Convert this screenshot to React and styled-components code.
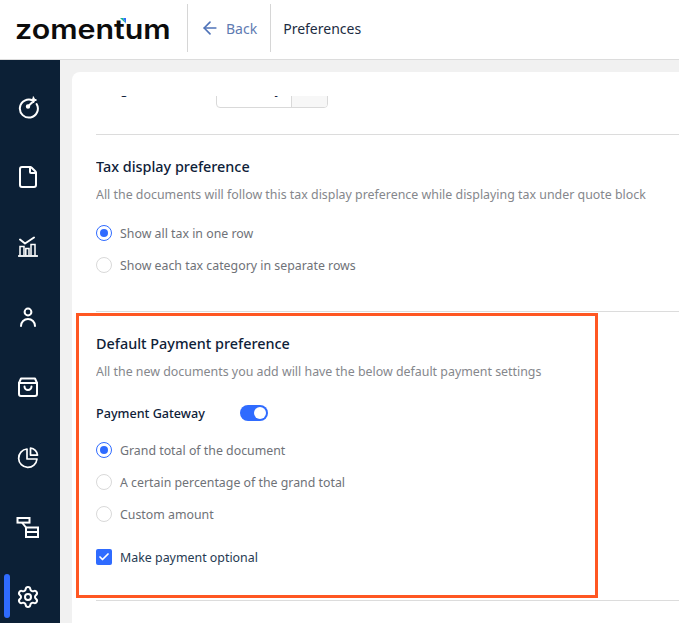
import styled, { createGlobalStyle } from "styled-components";
import { ArrowLeft, File, Settings, Check } from "lucide-react";

const GlobalStyle = createGlobalStyle`
    html, body {
        margin: 0;
        padding: 0;
        background: #fff;
        font-family: "Noto Sans", "Open Sans", sans-serif;
    }
    * { box-sizing: border-box; }
`;

const Page = styled.div`
    width: 679px;
    height: 623px;
    overflow: hidden;
    display: flex;
    flex-direction: column;
    position: relative;
`;

const Header = styled.header`
    height: 60px;
    flex: none;
    display: flex;
    align-items: flex-start;
    border-bottom: 1px solid #dcdcdc;
    background: #fff;
`;

const LogoBox = styled.div`
    width: 187px;
    height: 59px;
    padding-left: 15px;
    display: flex;
    align-items: center;
    position: relative;
`;

const Logo = styled.span`
    font-family: "Inter", sans-serif;
    font-weight: 600;
    font-size: 27px;
    color: #0c0c0c;
    line-height: 1;
    transform: scaleX(1.125);
    transform-origin: left center;
`;

const LogoMark = styled.svg`
    position: absolute;
    left: 120px;
    top: 18px;
`;

const HeaderCell = styled.div`
    height: 48px;
    margin-top: 4px;
    border-left: 1px solid #d6d6d6;
    display: flex;
    align-items: center;
    font-size: 14px;
    padding: 0 ${props => props.$pad}px 0 ${props => props.$left}px;
    color: ${props => props.$color};
    gap: 6px;
`;

const Body = styled.div`
    flex: 1;
    display: flex;
    min-height: 0;
    background: #f1f1f1;
`;

const Sidebar = styled.nav`
    width: 60px;
    flex: none;
    background: #0c2036;
    padding-top: 12px;
    display: flex;
    flex-direction: column;
`;

const NavItem = styled.div`
    height: 70px;
    flex: none;
    display: flex;
    align-items: center;
    justify-content: center;
    position: relative;
    margin-left: -4px;
    color: #fff;
`;

const ActiveBar = styled.span`
    position: absolute;
    left: 8px;
    top: 12px;
    width: 6px;
    height: 44px;
    border-radius: 3px;
    background: #2f6bff;
`;

const Main = styled.main`
    flex: 1;
    min-width: 0;
    padding: 12px 0 0 12px;
`;

const Card = styled.div`
    height: 100%;
    background: #fff;
    border-radius: 8px 0 0 0;
    padding: 24px 0 0 24px;
`;

const Scroll = styled.div`
    height: 100%;
    overflow: hidden;
`;

const CutRow = styled.div`
    margin-top: -19px;
    height: 58px;
    display: flex;
    align-items: flex-start;
    border-bottom: 1px solid #dcdcdc;
    font-size: 13px;
    line-height: 24px;
    color: #12233a;
`;

const CutLabel = styled.span`
    width: 120px;
`;

const Select = styled.div`
    width: 112px;
    height: 32px;
    margin-top: -1px;
    border: 1px solid #d9d9d9;
    border-radius: 4px;
    display: flex;
    overflow: hidden;
`;

const SelectValue = styled.div`
    width: 75px;
    padding-left: 14px;
    line-height: 24px;
    border-right: 1px solid #d9d9d9;
`;

const SelectAddon = styled.div`
    flex: 1;
    background: #f7f7f7;
`;

const Section = styled.section`
    height: ${props => props.$height}px;
    border-bottom: 1px solid #dcdcdc;
    padding-top: ${props => props.$top}px;
`;

const Title = styled.h3`
    margin: 0;
    font-size: 14.4px;
    font-weight: 500;
    line-height: 20px;
    color: #0e2138;
`;

const Description = styled.p`
    margin: 8px 0 0;
    font-size: 12.4px;
    line-height: 20px;
    color: #85878c;
    white-space: nowrap;
`;

const GatewayRow = styled.div`
    margin-top: 19px;
    height: 24px;
    display: flex;
    align-items: center;
`;

const GatewayLabel = styled.span`
    width: 144px;
    font-size: 12.6px;
    font-weight: 500;
    color: #0e2138;
`;

const Toggle = styled.span`
    width: 28px;
    height: 16px;
    border-radius: 8px;
    background: #2f6bff;
    display: flex;
    align-items: center;
    justify-content: flex-end;
    padding-right: 2px;
    &::after {
        content: "";
        width: 12px;
        height: 12px;
        border-radius: 50%;
        background: #fff;
    }
`;

const OptionList = styled.div`
    margin-top: ${props => props.$top}px;
    display: flex;
    flex-direction: column;
    gap: 12px;
`;

const Option = styled.label`
    height: 20px;
    display: flex;
    align-items: center;
    gap: 8px;
    font-size: 12.35px;
    color: #6f7278;
`;

const Radio = styled.span`
    width: 16px;
    height: 16px;
    border-radius: 50%;
    border: 1px solid ${props => (props.$on ? "#2f6bff" : "#d9d9d9")};
    display: flex;
    align-items: center;
    justify-content: center;
    &::after {
        content: "";
        display: ${props => (props.$on ? "block" : "none")};
        width: 8px;
        height: 8px;
        border-radius: 50%;
        background: #2f6bff;
    }
`;

const CheckRow = styled.label`
    margin-top: 23px;
    height: 20px;
    display: flex;
    align-items: center;
    gap: 8px;
    font-size: 12.4px;
    color: #263a52;
`;

const CheckBox = styled.span`
    width: 16px;
    height: 16px;
    border-radius: 2px;
    background: #2f6bff;
    color: #fff;
    display: flex;
    align-items: center;
    justify-content: center;
`;

const Highlight = styled.div`
    position: absolute;
    left: 76px;
    top: 313px;
    width: 522px;
    height: 285px;
    border: 3px solid #ff5722;
    pointer-events: none;
`;

const iconProps = {
    width: 24,
    height: 24,
    viewBox: "0 0 24 24",
    fill: "none",
    stroke: "currentColor",
    strokeWidth: 2,
    strokeLinecap: "round",
    strokeLinejoin: "round",
};

const TargetIcon = () => (
    <svg {...iconProps}>
        <path d="M17 5.6A9 9 0 1 0 20.6 9" />
        <path d="M12 11.5l4-4" />
        <circle cx="12" cy="11.5" r="1.2" fill="currentColor" />
        <path d="M17.5 2l.9 2.1 2.1.9-2.1.9-.9 2.1-.9-2.1-2.1-.9 2.1-.9z" fill="currentColor" strokeWidth="1" />
    </svg>
);

const ChartIcon = () => (
    <svg {...iconProps} strokeWidth="1.5">
        <path d="M3 21h18" strokeLinecap="square" strokeWidth="1.8" />
        <path d="M4 20.5v-9h4v9M9.8 20.5v-7h3.2v7M15 20.5v-11h4v11" strokeLinecap="butt" strokeLinejoin="miter" />
        <path d="M4 4.5l5 4 9-6" strokeWidth="2" />
    </svg>
);

const UserIcon = () => (
    <svg {...iconProps}>
        <circle cx="12" cy="7" r="3.4" />
        <path d="M5 21a7 7 0 0 1 14 0" />
    </svg>
);

const BagIcon = () => (
    <svg {...iconProps}>
        <path d="M5 3.5h14l2 4.5v11a2 2 0 0 1-2 2H5a2 2 0 0 1-2-2V8z" />
        <path d="M3 8h18" />
        <path d="M8.5 11.5a3.5 3.5 0 0 0 7 0" />
    </svg>
);

const PieIcon = () => (
    <svg {...iconProps} strokeWidth="1.7">
        <path d="M11 4a9.2 9.2 0 1 0 10 10H11z" />
        <path d="M14.5 3.1a7.5 7.5 0 0 1 7 7H14.5z" />
    </svg>
);

const TreeIcon = () => (
    <svg {...iconProps} strokeLinecap="butt" strokeLinejoin="miter">
        <rect x="1.5" y="3" width="12" height="4.6" />
        <path d="M6 7.5l4 5" />
        <rect x="10" y="12.5" width="12" height="4.5" />
        <rect x="10" y="17" width="12" height="5" />
    </svg>
);

const navIcons = [
    <TargetIcon />,
    <File size={24} strokeWidth={2} />,
    <ChartIcon />,
    <UserIcon />,
    <BagIcon />,
    <PieIcon />,
    <TreeIcon />,
    <Settings size={24} strokeWidth={2} />,
];

export default function App() {
    return (
        <Page>
            <GlobalStyle />
            <Header>
                <LogoBox>
                    <Logo>zomentum</Logo>
                    <LogoMark width="6" height="6" viewBox="0 0 6 6">
                        <path d="M0 0h3l3 5.5z" fill="#16b88e" />
                        <path d="M3 0h3v5.5z" fill="#2f6bff" />
                    </LogoMark>
                </LogoBox>
                <HeaderCell $left={12} $pad={13} $color="#5f7bb2">
                    <ArrowLeft size={20} strokeWidth={2} color="#4f73b8" />
                    Back
                </HeaderCell>
                <HeaderCell $left={12} $pad={0} $color="#1c2c42">Preferences</HeaderCell>
            </Header>
            <Body>
                <Sidebar>
                    {navIcons.map((icon, i) => (
                        <NavItem key={i}>
                            {i === navIcons.length - 1 && <ActiveBar />}
                            {icon}
                        </NavItem>
                    ))}
                </Sidebar>
                <Main>
                    <Card>
                        <Scroll>
                            <CutRow>
                                <CutLabel>Margin</CutLabel>
                                <Select>
                                    <SelectValue>Monthly</SelectValue>
                                    <SelectAddon />
                                </Select>
                            </CutRow>
                            <Section $height={177} $top={22}>
                                <Title>Tax display preference</Title>
                                <Description>All the documents will follow this tax display preference while displaying tax under quote block</Description>
                                <OptionList $top={18}>
                                    <Option><Radio $on />Show all tax in one row</Option>
                                    <Option><Radio />Show each tax category in separate rows</Option>
                                </OptionList>
                            </Section>
                            <Section $height={289} $top={22}>
                                <Title>Default Payment preference</Title>
                                <Description>All the new documents you add will have the below default payment settings</Description>
                                <GatewayRow>
                                    <GatewayLabel>Payment Gateway</GatewayLabel>
                                    <Toggle />
                                </GatewayRow>
                                <OptionList $top={15}>
                                    <Option><Radio $on />Grand total of the document</Option>
                                    <Option><Radio />A certain percentage of the grand total</Option>
                                    <Option><Radio />Custom amount</Option>
                                </OptionList>
                                <CheckRow>
                                    <CheckBox><Check size={12} strokeWidth={3.5} /></CheckBox>
                                    Make payment optional
                                </CheckRow>
                            </Section>
                        </Scroll>
                    </Card>
                </Main>
            </Body>
            <Highlight />
        </Page>
    );
}
